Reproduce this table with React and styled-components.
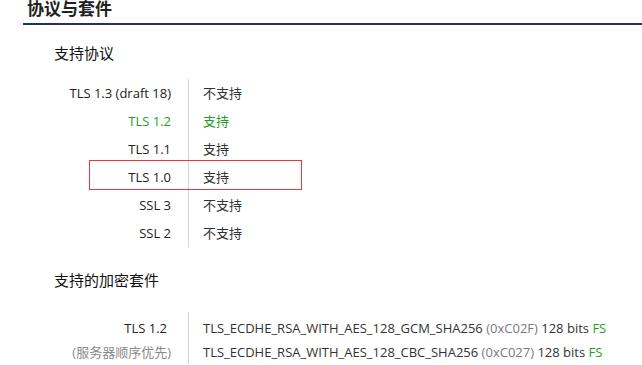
import React from 'react';
import styled, { createGlobalStyle } from 'styled-components';

const GlobalStyle = createGlobalStyle`
	body {
		margin: 0;
		background: #fff;
		font-family: 'Open Sans', 'Noto Sans CJK SC', sans-serif;
		color: #333;
	}
`;

const protocols = [
	{ name: 'TLS 1.3 (draft 18)', ok: false },
	{ name: 'TLS 1.2', ok: true, best: true },
	{ name: 'TLS 1.1', ok: true },
	{ name: 'TLS 1.0', ok: true, marked: true },
	{ name: 'SSL 3', ok: false },
	{ name: 'SSL 2', ok: false },
];

const suites = [
	{ name: 'TLS_ECDHE_RSA_WITH_AES_128_GCM_SHA256', code: '0xC02F' },
	{ name: 'TLS_ECDHE_RSA_WITH_AES_128_CBC_SHA256', code: '0xC027' },
];

const Page = styled.div`
	padding-left: 23px;
	height: 365px;
	overflow: hidden;
`;

const Title = styled.h2`
	margin: 0;
	height: 23px;
	padding-left: 4px;
	font-size: 17px;
	line-height: 18px;
	font-weight: 700;
	color: #222;
	border-bottom: 2px solid #1f3260;
	box-sizing: content-box;
`;

const SectionTitle = styled.h3`
	margin: 0;
	padding-left: 31px;
	font-size: 15px;
	font-weight: 400;
	line-height: 20px;
	color: #111;
	margin-top: ${(p) => p.top}px;
`;

const Table = styled.div`
	display: grid;
	grid-template-columns: 166px 1fr;
	margin-top: ${(p) => p.top}px;
	font-size: 13px;
`;

const Row = styled.div`
	display: contents;
`;

const Label = styled.div`
	position: relative;
	text-align: right;
	padding-right: 17px;
	border-right: 1px solid #d4d4d4;
	height: ${(p) => p.h}px;
	line-height: ${(p) => p.h}px;
	padding-top: ${(p) => p.pad || 0}px;
	color: ${(p) => (p.green ? '#1e9e28' : p.gray ? '#8a8a8a' : '#222')};
	white-space: nowrap;
`;

const Value = styled.div`
	padding-left: 14px;
	height: ${(p) => p.h}px;
	line-height: ${(p) => p.h}px;
	padding-top: ${(p) => p.pad || 0}px;
	color: ${(p) => (p.green ? '#1e9e28' : '#333')};
	white-space: nowrap;
`;

const Note = styled.span`
	color: #7a7a7a;
`;

const Fs = styled.span`
	color: #1e9e28;
`;

// red outline drawn over the TLS 1.0 row
const Marker = styled.div`
	position: absolute;
	left: 66px;
	top: -3px;
	width: 211px;
	height: 28px;
	border: 1px solid #e8343a;
	pointer-events: none;
`;

const App = () => {
	return (
		<Page>
			<GlobalStyle />
			<Title>协议与套件</Title>

			<SectionTitle top={18}>支持协议</SectionTitle>
			<Table top={16}>
				{protocols.map((p) => (
					<Row key={p.name}>
						<Label h={28} green={p.best}>
							{p.marked && <Marker />}
							{p.name}
						</Label>
						<Value h={28} green={p.best}>
							{p.ok ? '支持' : '不支持'}
						</Value>
					</Row>
				))}
			</Table>

			<SectionTitle top={23}>支持的加密套件</SectionTitle>
			<Table top={22}>
				<Row>
					<Label h={24} pad={4}>
						<span style={{ marginRight: 4 }}>TLS 1.2</span>
					</Label>
					<Value h={24} pad={4}>
						{suites[0].name} <Note>({suites[0].code})</Note> 128 bits <Fs>FS</Fs>
					</Value>
				</Row>
				<Row>
					<Label h={24} gray>
						(服务器顺序优先)
					</Label>
					<Value h={24}>
						{suites[1].name} <Note>({suites[1].code})</Note> 128 bits <Fs>FS</Fs>
					</Value>
				</Row>
			</Table>
		</Page>
	);
};

export default App;
